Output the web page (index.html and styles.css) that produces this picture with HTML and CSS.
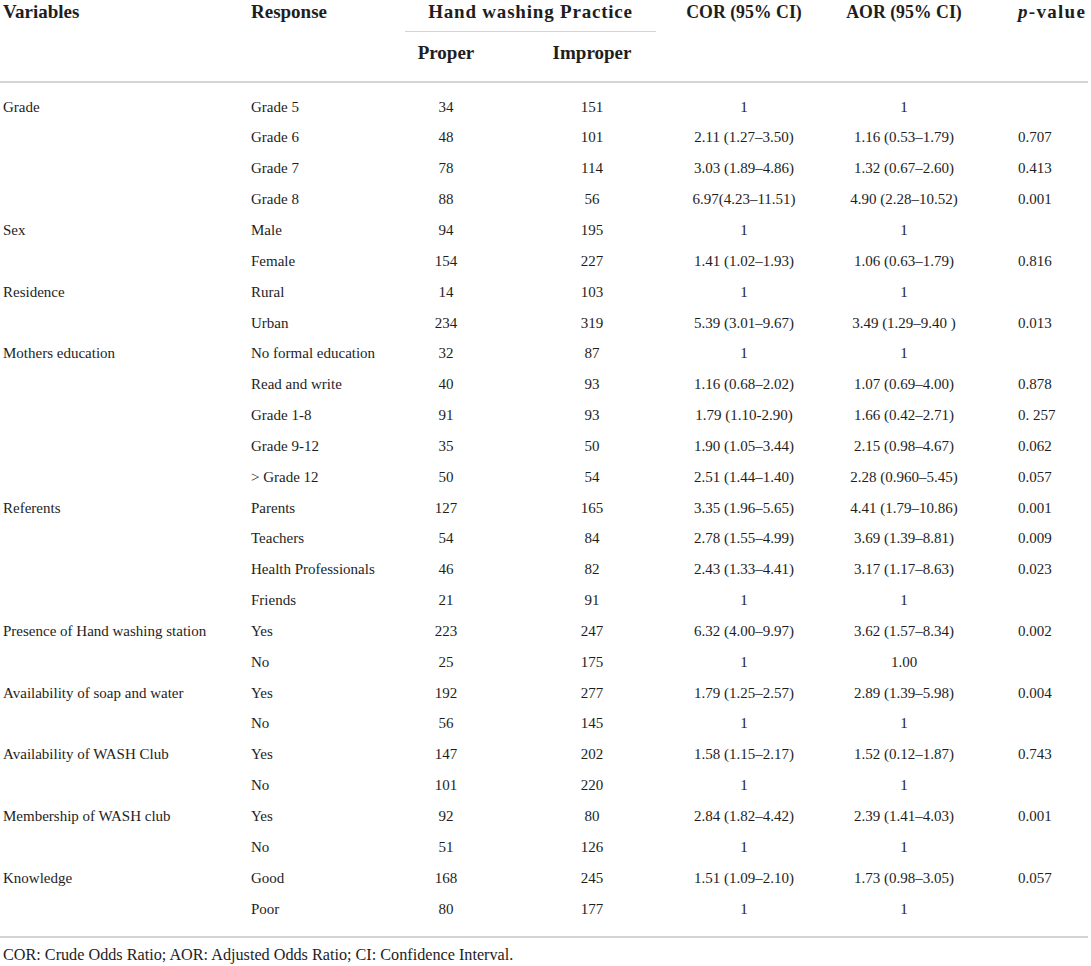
FILE: index.html
```html
<!DOCTYPE html>
<html>
<head>
<meta charset="utf-8">
<link rel="stylesheet" href="styles.css">
</head>
<body>
<div class="wrap">
<table class="data">
<colgroup>
<col class="c1"><col class="c2"><col class="c3"><col class="c4"><col class="c5"><col class="c6"><col class="c7">
</colgroup>
<thead>
<tr class="h1">
<th rowspan="2" class="left">Variables</th>
<th rowspan="2" class="left">Response</th>
<th colspan="2" class="group"><div class="grouplabel">Hand washing Practice</div></th>
<th rowspan="2" class="ci">COR (95% CI)</th>
<th rowspan="2" class="ci">AOR (95% CI)</th>
<th rowspan="2" class="pv"><i>p</i>-value</th>
</tr>
<tr class="h2">
<th class="sub">Proper</th>
<th class="sub imp">Improper</th>
</tr>
</thead>
<tbody>
<tr><td class="left">Grade</td><td class="left">Grade 5</td><td>34</td><td class="imp">151</td><td>1</td><td>1</td><td class="pv"></td></tr>
<tr><td class="left"></td><td class="left">Grade 6</td><td>48</td><td class="imp">101</td><td>2.11 (1.27–3.50)</td><td>1.16 (0.53–1.79)</td><td class="pv">0.707</td></tr>
<tr><td class="left"></td><td class="left">Grade 7</td><td>78</td><td class="imp">114</td><td>3.03 (1.89–4.86)</td><td>1.32 (0.67–2.60)</td><td class="pv">0.413</td></tr>
<tr><td class="left"></td><td class="left">Grade 8</td><td>88</td><td class="imp">56</td><td>6.97(4.23–11.51)</td><td>4.90 (2.28–10.52)</td><td class="pv">0.001</td></tr>
<tr><td class="left">Sex</td><td class="left">Male</td><td>94</td><td class="imp">195</td><td>1</td><td>1</td><td class="pv"></td></tr>
<tr><td class="left"></td><td class="left">Female</td><td>154</td><td class="imp">227</td><td>1.41 (1.02–1.93)</td><td>1.06 (0.63–1.79)</td><td class="pv">0.816</td></tr>
<tr><td class="left">Residence</td><td class="left">Rural</td><td>14</td><td class="imp">103</td><td>1</td><td>1</td><td class="pv"></td></tr>
<tr><td class="left"></td><td class="left">Urban</td><td>234</td><td class="imp">319</td><td>5.39 (3.01–9.67)</td><td>3.49 (1.29–9.40 )</td><td class="pv">0.013</td></tr>
<tr><td class="left">Mothers education</td><td class="left">No formal education</td><td>32</td><td class="imp">87</td><td>1</td><td>1</td><td class="pv"></td></tr>
<tr><td class="left"></td><td class="left">Read and write</td><td>40</td><td class="imp">93</td><td>1.16 (0.68–2.02)</td><td>1.07 (0.69–4.00)</td><td class="pv">0.878</td></tr>
<tr><td class="left"></td><td class="left">Grade 1-8</td><td>91</td><td class="imp">93</td><td>1.79 (1.10-2.90)</td><td>1.66 (0.42–2.71)</td><td class="pv">0. 257</td></tr>
<tr><td class="left"></td><td class="left">Grade 9-12</td><td>35</td><td class="imp">50</td><td>1.90 (1.05–3.44)</td><td>2.15 (0.98–4.67)</td><td class="pv">0.062</td></tr>
<tr><td class="left"></td><td class="left">&gt; Grade 12</td><td>50</td><td class="imp">54</td><td>2.51 (1.44–1.40)</td><td>2.28 (0.960–5.45)</td><td class="pv">0.057</td></tr>
<tr><td class="left">Referents</td><td class="left">Parents</td><td>127</td><td class="imp">165</td><td>3.35 (1.96–5.65)</td><td>4.41 (1.79–10.86)</td><td class="pv">0.001</td></tr>
<tr><td class="left"></td><td class="left">Teachers</td><td>54</td><td class="imp">84</td><td>2.78 (1.55–4.99)</td><td>3.69 (1.39–8.81)</td><td class="pv">0.009</td></tr>
<tr><td class="left"></td><td class="left">Health Professionals</td><td>46</td><td class="imp">82</td><td>2.43 (1.33–4.41)</td><td>3.17 (1.17–8.63)</td><td class="pv">0.023</td></tr>
<tr><td class="left"></td><td class="left">Friends</td><td>21</td><td class="imp">91</td><td>1</td><td>1</td><td class="pv"></td></tr>
<tr><td class="left">Presence of Hand washing station</td><td class="left">Yes</td><td>223</td><td class="imp">247</td><td>6.32 (4.00–9.97)</td><td>3.62 (1.57–8.34)</td><td class="pv">0.002</td></tr>
<tr><td class="left"></td><td class="left">No</td><td>25</td><td class="imp">175</td><td>1</td><td>1.00</td><td class="pv"></td></tr>
<tr><td class="left">Availability of soap and water</td><td class="left">Yes</td><td>192</td><td class="imp">277</td><td>1.79 (1.25–2.57)</td><td>2.89 (1.39–5.98)</td><td class="pv">0.004</td></tr>
<tr><td class="left"></td><td class="left">No</td><td>56</td><td class="imp">145</td><td>1</td><td>1</td><td class="pv"></td></tr>
<tr><td class="left">Availability of WASH Club</td><td class="left">Yes</td><td>147</td><td class="imp">202</td><td>1.58 (1.15–2.17)</td><td>1.52 (0.12–1.87)</td><td class="pv">0.743</td></tr>
<tr><td class="left"></td><td class="left">No</td><td>101</td><td class="imp">220</td><td>1</td><td>1</td><td class="pv"></td></tr>
<tr><td class="left">Membership of WASH club</td><td class="left">Yes</td><td>92</td><td class="imp">80</td><td>2.84 (1.82–4.42)</td><td>2.39 (1.41–4.03)</td><td class="pv">0.001</td></tr>
<tr><td class="left"></td><td class="left">No</td><td>51</td><td class="imp">126</td><td>1</td><td>1</td><td class="pv"></td></tr>
<tr><td class="left">Knowledge</td><td class="left">Good</td><td>168</td><td class="imp">245</td><td>1.51 (1.09–2.10)</td><td>1.73 (0.98–3.05)</td><td class="pv">0.057</td></tr>
<tr><td class="left"></td><td class="left">Poor</td><td>80</td><td class="imp">177</td><td>1</td><td>1</td><td class="pv"></td></tr>
</tbody>
</table>
<p class="foot">COR: Crude Odds Ratio; AOR: Adjusted Odds Ratio; CI: Confidence Interval.</p>
</div>
</body>
</html>
```
FILE: styles.css
```css
html, body {
  margin: 0;
  padding: 0;
  background: #ffffff;
}
body {
  font-family: "Liberation Serif", "Times New Roman", serif;
  color: #1e1e1e;
}
.wrap {
  width: 1088px;
}
.data {
  width: 1088px;
  table-layout: fixed;
  border-collapse: collapse;
  font-size: 15px;
}
.c1 { width: 248px; }
.c2 { width: 157px; }
.c3 { width: 82px; }
.c4 { width: 170px; }
.c5 { width: 174px; }
.c6 { width: 146px; }
.c7 { width: 111px; }

.data th {
  font-size: 19px;
  font-weight: bold;
  text-align: center;
  vertical-align: top;
  padding: 0;
  line-height: 24px;
  white-space: nowrap;
  border-bottom: 2px solid #d4d4d4;
}
.data th.ci {
  font-size: 17.8px;
}
.data th.left, .data td.left {
  text-align: left;
  padding-left: 3px;
}
.data .imp {
  padding-left: 40px;
}
.data .pv {
  text-align: left;
  padding-left: 41px;
}
.data th.pv {
  letter-spacing: 1.3px;
}
.data th.group {
  border-bottom: none;
  height: 33px;
}
.grouplabel {
  margin-right: 1px;
  height: 32px;
  border-bottom: 1px solid #d4d4d4;
  box-sizing: border-box;
  letter-spacing: 0.8px;
}
.data .h2 th {
  height: 49px;
  padding-top: 8px;
  box-sizing: border-box;
}
.data .h2 th.imp {
  padding-left: 40px;
}
.data td {
  text-align: center;
  padding: 0;
  line-height: 30.85px;
  white-space: nowrap;
}
.data tbody tr:first-child td {
  padding-top: 8.6px;
}
.data tbody tr:last-child td {
  padding-bottom: 11.6px;
  border-bottom: 2px solid #d4d4d4;
}
.foot {
  margin: 7px 0 0 3px;
  font-size: 16.2px;
  line-height: 20px;
}
```
